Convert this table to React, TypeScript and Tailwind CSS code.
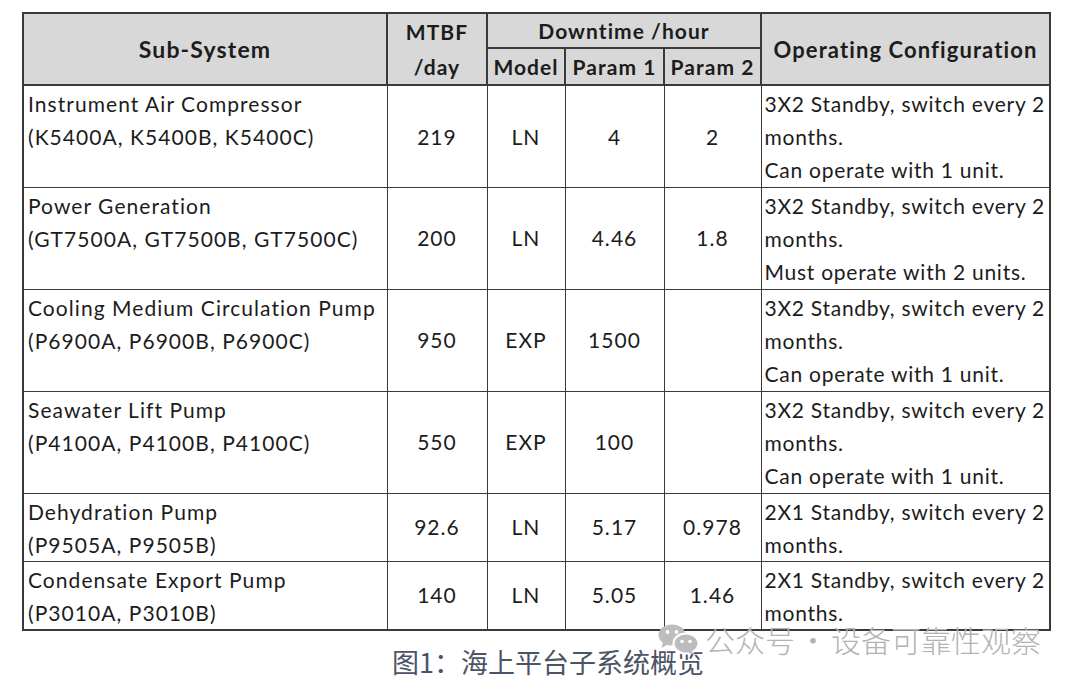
import React from 'react'

const rows = [
  {
    name: 'Instrument Air Compressor',
    tags: '(K5400A, K5400B, K5400C)',
    mtbf: '219',
    model: 'LN',
    p1: '4',
    p2: '2',
    config: ['3X2 Standby, switch every 2', 'months.', 'Can operate with 1 unit.'],
  },
  {
    name: 'Power Generation',
    tags: '(GT7500A, GT7500B, GT7500C)',
    mtbf: '200',
    model: 'LN',
    p1: '4.46',
    p2: '1.8',
    config: ['3X2 Standby, switch every 2', 'months.', 'Must operate with 2 units.'],
  },
  {
    name: 'Cooling Medium Circulation Pump',
    tags: '(P6900A, P6900B, P6900C)',
    mtbf: '950',
    model: 'EXP',
    p1: '1500',
    p2: '',
    config: ['3X2 Standby, switch every 2', 'months.', 'Can operate with 1 unit.'],
  },
  {
    name: 'Seawater Lift Pump',
    tags: '(P4100A, P4100B, P4100C)',
    mtbf: '550',
    model: 'EXP',
    p1: '100',
    p2: '',
    config: ['3X2 Standby, switch every 2', 'months.', 'Can operate with 1 unit.'],
  },
  {
    name: 'Dehydration Pump',
    tags: '(P9505A, P9505B)',
    mtbf: '92.6',
    model: 'LN',
    p1: '5.17',
    p2: '0.978',
    config: ['2X1 Standby, switch every 2', 'months.'],
  },
  {
    name: 'Condensate Export Pump',
    tags: '(P3010A, P3010B)',
    mtbf: '140',
    model: 'LN',
    p1: '5.05',
    p2: '1.46',
    config: ['2X1 Standby, switch every 2', 'months.'],
  },
]

// wechat logo, two bubbles
const WeChatIcon = () => (
  <svg width="42" height="31" viewBox="0 0 42 31">
    <ellipse cx="14" cy="11" rx="13.5" ry="10.5" fill="#bdbdbd" />
    <path d="M5 18 L3.5 24 L10.5 20 Z" fill="#bdbdbd" />
    <circle cx="9.5" cy="8" r="1.9" fill="#fff" />
    <circle cx="18.5" cy="8" r="1.9" fill="#fff" />
    <ellipse cx="28" cy="19.5" rx="12.5" ry="10" fill="#bdbdbd" stroke="#fff" strokeWidth="2.2" />
    <path d="M34 27 L36.5 31 L30 28.5 Z" fill="#bdbdbd" />
    <circle cx="24" cy="17.5" r="1.8" fill="#fff" />
    <circle cx="32" cy="17.5" r="1.8" fill="#fff" />
  </svg>
)

export default function App() {
  const cell = 'border border-[#3a3a3a] p-0'
  const head = 'border-2 border-[#3a3a3a] bg-[#d8d8d8] font-bold p-0 tracking-[0.05em]'

  return (
    <div
      className="relative w-[1080px] h-[684px] bg-white text-[#1c1c1c] overflow-hidden"
      style={{ fontFamily: 'Lato, "Noto Sans", sans-serif' }}
    >
      <div className="pt-[12px] pl-[22px]">
        <table className="table-fixed border-collapse border-2 border-[#3a3a3a] text-[21px] tracking-[0.05em]">
          <colgroup>
            <col className="w-[364px]" />
            <col className="w-[100px]" />
            <col className="w-[78px]" />
            <col className="w-[99px]" />
            <col className="w-[97px]" />
            <col className="w-[289px]" />
          </colgroup>
          <thead>
            <tr className="h-[33px]">
              <th rowSpan={2} className={`${head} text-[23px]`}>
                Sub-System
              </th>
              <th rowSpan={2} className={`${head} leading-[35px] text-[21px]`}>
                MTBF
                <br />
                /day
              </th>
              <th colSpan={3} className={`${head} text-[21px]`}>
                Downtime /hour
              </th>
              <th rowSpan={2} className={`${head} text-[22px] tracking-[0.03em]`}>
                Operating Configuration
              </th>
            </tr>
            <tr className="h-[36px] text-[21px]">
              <th className={`${head} tracking-[0.02em]`}>Model</th>
              <th className={head}>Param 1</th>
              <th className={head}>Param 2</th>
            </tr>
          </thead>
          <tbody>
            {rows.map((r) => (
              <tr key={r.name} className={r.config.length === 3 ? 'h-[102px]' : 'h-[68px]'}>
                <td className={`${cell} align-top pl-[4px] pt-[1px] leading-[33px]`}>
                  <div>{r.name}</div>
                  <div>{r.tags}</div>
                </td>
                <td className={`${cell} text-center`}>{r.mtbf}</td>
                <td className={`${cell} text-center`}>{r.model}</td>
                <td className={`${cell} text-center`}>{r.p1}</td>
                <td className={`${cell} text-center`}>{r.p2}</td>
                <td className={`${cell} align-top pl-[3px] pt-[1px] leading-[33px] tracking-[0.035em]`}>
                  {r.config.map((line) => (
                    <div key={line}>{line}</div>
                  ))}
                </td>
              </tr>
            ))}
          </tbody>
        </table>
      </div>

      <div
        className="pl-[392px] pt-[14px] text-[27px] leading-[34px] text-[#4b5466]"
        style={{ fontFamily: '"Noto Sans CJK SC", sans-serif' }}
      >
        图1：海上平台子系统概览
      </div>

      {/* watermark */}
      <div
        className="absolute left-[658px] top-[622px] flex items-center gap-[5px] text-[30px] leading-[34px] font-light text-[#b3b3b3]"
        style={{ fontFamily: '"Noto Sans CJK SC", sans-serif' }}
      >
        <WeChatIcon />
        <span>
          公众号<span className="px-[3px]">·</span>设备可靠性观察
        </span>
      </div>
    </div>
  )
}
